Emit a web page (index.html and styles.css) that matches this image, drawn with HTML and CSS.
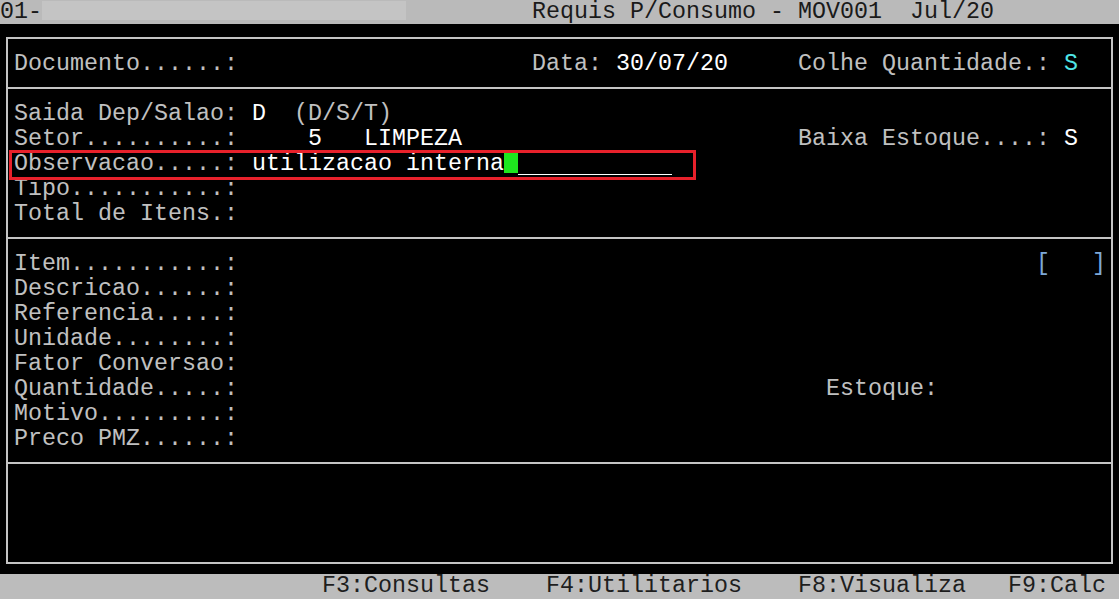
FILE: index.html
```html
<!DOCTYPE html>
<html lang="pt">
<head>
    <meta charset="UTF-8">
    <meta name="viewport" content="width=device-width, initial-scale=1.0">
    <title>Requis P/Consumo - MOV001</title>
    <link rel="stylesheet" href="styles.css">
</head>
<body>
    <div class="screen">
        <div class="topbar"><span>01-</span><span class="top-field"></span><span class="top-title">         Requis P/Consumo - MOV001  Jul/20</span></div>

        <div class="frame">
            <div class="section sec-doc">
                <div class="row">Documento......:                     Data: <span class="val">30/07/20</span>     Colhe Quantidade.: <span class="cyan">S</span></div>
            </div>

            <div class="section sec-head">
                <div class="row">Saida Dep/Salao: <span class="val">D</span>  (D/S/T)</div>
                <div class="row">Setor..........:     <span class="val">5   LIMPEZA</span>                        Baixa Estoque....: <span class="val">S</span></div>
                <div class="row">Observacao.....: <span class="val">utilizacao interna</span><span class="cursor"></span><span class="field-line"></span></div>
                <div class="row">Tipo...........:</div>
                <div class="row">Total de Itens.:</div>
            </div>

            <div class="section sec-item">
                <div class="row">Item...........:                                                         <span class="bracket">[   ]</span></div>
                <div class="row">Descricao......:</div>
                <div class="row">Referencia.....:</div>
                <div class="row">Unidade........:</div>
                <div class="row">Fator Conversao:</div>
                <div class="row">Quantidade.....:                                          Estoque:</div>
                <div class="row">Motivo.........:</div>
                <div class="row">Preco PMZ......:</div>
            </div>

            <div class="section sec-msg"></div>
        </div>

        <div class="bottombar">                       F3:Consultas    F4:Utilitarios    F8:Visualiza   F9:Calc</div>

        <div class="focus-box"></div>
    </div>
</body>
</html>
```

FILE: styles.css
```css
* { margin: 0; padding: 0; box-sizing: border-box; }
html, body { background: #000; overflow: hidden; }
body { font-family: "Liberation Mono", "Courier New", monospace; font-size: 23.33px; color: #c0c0c0; }

.screen { position: relative; width: 1120px; height: 600px; overflow: hidden; }

.topbar { height: 24px; line-height: 24px; background: #bababa; color: #1a1a1a; white-space: pre; }
.top-field { display: inline-block; vertical-align: top; width: 364px; height: 19px; margin-top: 1px; background: #c4c4c4; }

.frame { margin: 13px 0 0 6px; width: 1107px; border: 2px solid #c4c4c4; }
.section { padding: 11px 0 12px 6px; }
.section + .section { border-top: 2px solid #c4c4c4; }
.sec-msg { height: 100px; }

.row { height: 25px; padding-top: 4px; line-height: 21px; white-space: pre; }
.val { color: #ffffff; }
.cyan { color: #4fe6e6; }
.bracket { color: #7ea8d8; }

.cursor { display: inline-block; vertical-align: top; width: 14px; height: 21px; margin-top: -2px; background: #1ee61e; }
.field-line { display: inline-block; vertical-align: top; width: 154px; height: 21px; border-bottom: 1px solid #ffffff; }

.bottombar { margin-top: 10px; height: 26px; line-height: 25px; background: #bcbcbc; color: #1e1e1e; white-space: pre; }

.focus-box { position: absolute; left: 9px; top: 150px; width: 687px; height: 30px; border: 3px solid #e8212b; }
```
